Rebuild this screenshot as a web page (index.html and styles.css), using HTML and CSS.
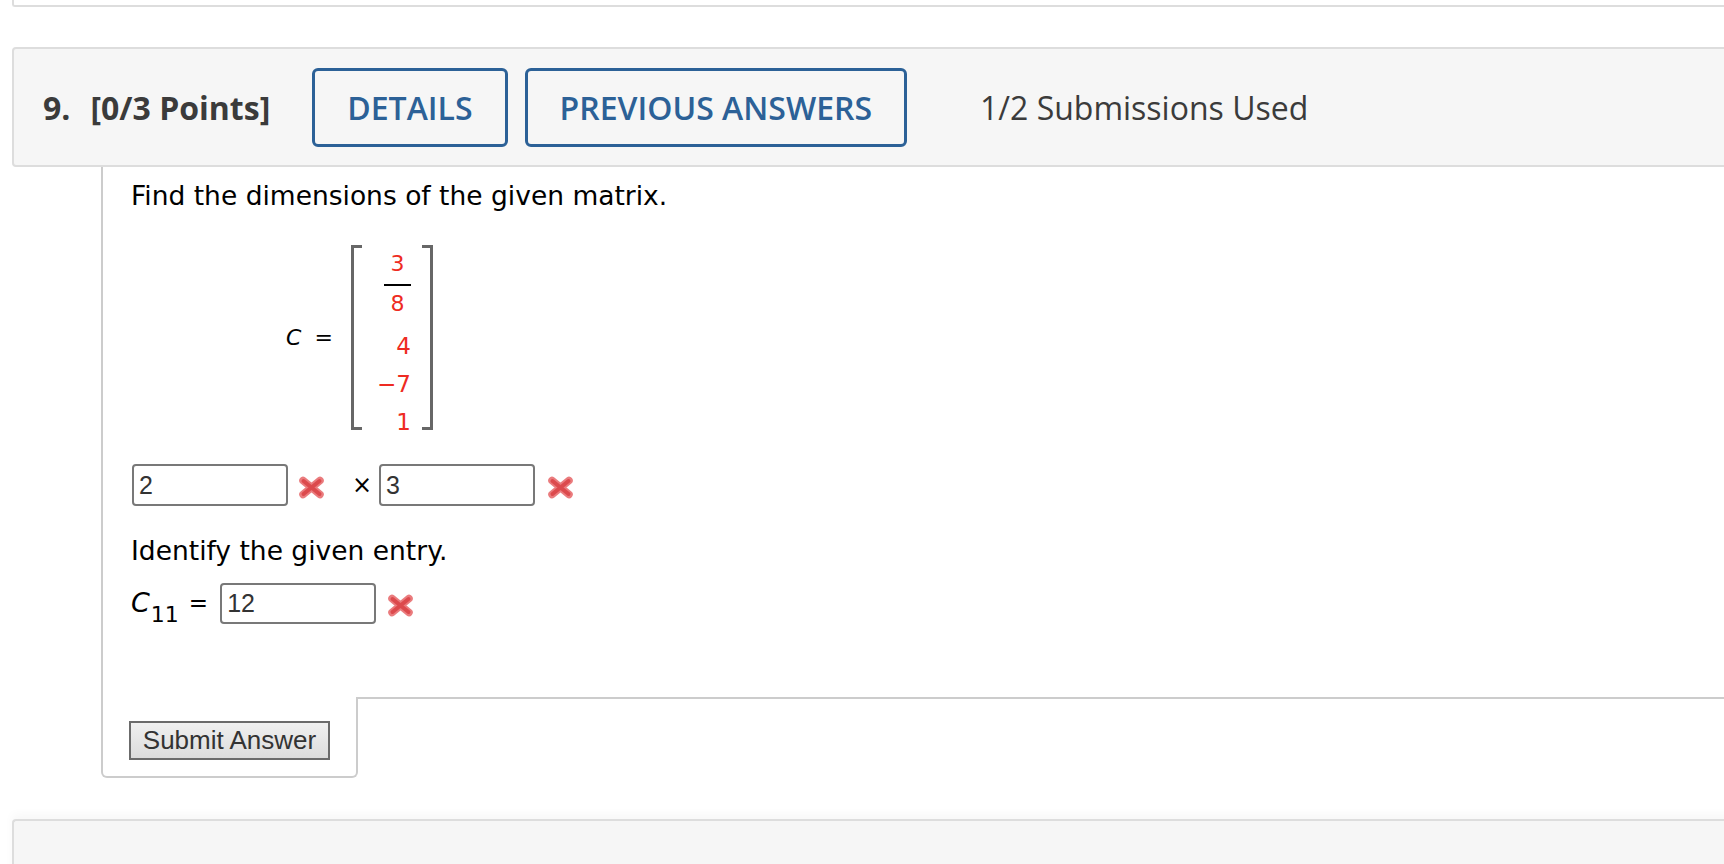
FILE: index.html
```html
<!DOCTYPE html>
<html lang="en">
<head>
<meta charset="utf-8">
<title>Question 9</title>
<link rel="stylesheet" href="styles.css">
</head>
<body>
<div class="page">
  <div class="prev-box"></div>
  <div class="question">
    <div class="q-header">
      <span class="q-num">9.</span>
      <span class="q-points">[0/3 Points]</span>
      <button class="hdr-btn btn-details">DETAILS</button>
      <button class="hdr-btn btn-prev">PREVIOUS ANSWERS</button>
      <span class="q-subs">1/2 Submissions Used</span>
    </div>
    <div class="q-body">
      <div class="q-content">
        <p class="prompt">Find the dimensions of the given matrix.</p>
        <div class="matrix">
          <div class="m-label"><span class="var">C</span><span class="m-eq">=</span></div>
          <div class="bracket bracket-l"></div>
          <div class="m-col">
            <div class="frac"><span class="num">3</span><span class="bar"></span><span class="den">8</span></div>
            <div class="entry">4</div>
            <div class="entry">&minus;7</div>
            <div class="entry">1</div>
          </div>
          <div class="bracket bracket-r"></div>
        </div>
        <div class="ans-row">
          <input class="ans ans-first" value="2" readonly>
          <svg class="xmark" viewBox="0 0 27 23" width="27" height="23"><path d="M5 4.5 L22 18.5 M22 4.5 L5 18.5" stroke="#ea7c7e" stroke-width="7.5" stroke-linecap="round" fill="none"/><path d="M5.5 5 L21.5 18 M21.5 5 L5.5 18" stroke="#dc4a4d" stroke-width="4" stroke-linecap="round" fill="none"/></svg>
          <span class="times">&times;</span>
          <input class="ans ans-second" value="3" readonly>
          <svg class="xmark xmark-2" viewBox="0 0 27 23" width="27" height="23"><path d="M5 4.5 L22 18.5 M22 4.5 L5 18.5" stroke="#ea7c7e" stroke-width="7.5" stroke-linecap="round" fill="none"/><path d="M5.5 5 L21.5 18 M21.5 5 L5.5 18" stroke="#dc4a4d" stroke-width="4" stroke-linecap="round" fill="none"/></svg>
        </div>
        <p class="prompt prompt-2">Identify the given entry.</p>
        <div class="entry-row">
          <span class="c-label"><span class="var">C</span><sub class="c-sub">11</sub></span>
          <span class="eq">=</span>
          <input class="ans ans-entry" value="12" readonly>
          <svg class="xmark xmark-3" viewBox="0 0 27 23" width="27" height="23"><path d="M5 4.5 L22 18.5 M22 4.5 L5 18.5" stroke="#ea7c7e" stroke-width="7.5" stroke-linecap="round" fill="none"/><path d="M5.5 5 L21.5 18 M21.5 5 L5.5 18" stroke="#dc4a4d" stroke-width="4" stroke-linecap="round" fill="none"/></svg>
        </div>
      </div>
      <div class="q-footer">
        <div class="submit-cell"><button class="submit">Submit Answer</button></div>
        <div class="footer-fill"></div>
      </div>
    </div>
  </div>
  <div class="next-box"></div>
</div>
</body>
</html>
```
FILE: styles.css
```css
html, body {
  margin: 0;
  padding: 0;
  background: #ffffff;
}

body {
  overflow: hidden;
}

.page {
  width: 1760px;
  padding-left: 12px;
  box-sizing: border-box;
}

.prev-box {
  height: 5px;
  border-left: 2px solid #dddddd;
  border-bottom: 2px solid #dddddd;
  border-bottom-left-radius: 3px;
}

.question {
  margin-top: 40px;
}

.q-header {
  display: flex;
  align-items: center;
  height: 120px;
  box-sizing: border-box;
  border: 2px solid #dddddd;
  border-radius: 4px;
  background: #f6f6f6;
  padding-left: 29px;
  font-family: "Open Sans", "Liberation Sans", sans-serif;
  font-size: 32px;
  color: #3b3b3b;
}

.q-num,
.q-points {
  font-weight: 700;
}

.q-points {
  margin-left: 20px;
}

.hdr-btn {
  height: 79px;
  box-sizing: border-box;
  border: 3px solid #2c6197;
  border-radius: 6px;
  background: transparent;
  color: #2c6197;
  font-family: "Open Sans", "Liberation Sans", sans-serif;
  font-weight: 600;
  font-size: 32px;
  padding: 0 32px;
  margin: 0;
}

.btn-details {
  margin-left: 42px;
}

.btn-prev {
  margin-left: 17px;
}

.q-subs {
  margin-left: 73px;
  font-weight: 400;
}

.q-body {
  margin-left: 89px;
}

.q-content {
  border-left: 2px solid #cccccc;
  padding: 13px 0 73px 28px;
}

.prompt {
  margin: 0;
  font-family: "DejaVu Sans", Verdana, sans-serif;
  font-size: 26.5px;
  line-height: 32px;
  color: #000000;
}

.matrix {
  display: flex;
  align-items: flex-start;
  margin-top: 33px;
  height: 185px;
  font-family: "DejaVu Sans", Verdana, sans-serif;
}

.m-label {
  width: 65px;
  margin-left: 155px;
  margin-top: 83px;
  font-size: 22px;
  line-height: 20px;
  color: #000000;
  white-space: nowrap;
}

.var {
  font-style: italic;
}

.m-eq {
  margin-left: 13px;
  font-size: 22px;
}

.bracket {
  width: 8px;
  height: 179px;
  border: 3px solid #676767;
}

.bracket-l {
  border-right: none;
}

.bracket-r {
  border-left: none;
}

.m-col {
  width: 49px;
  padding-right: 11px;
  height: 185px;
  display: flex;
  flex-direction: column;
  align-items: flex-end;
  color: #ee2b22;
}

.frac {
  width: 27px;
  display: flex;
  flex-direction: column;
  align-items: center;
  padding-top: 8px;
  margin-bottom: 12px;
  font-size: 22px;
  line-height: 22px;
}

.frac .bar {
  width: 27px;
  height: 2px;
  background: #000000;
  margin: 9px 0 7px;
}

.entry {
  font-size: 23px;
  line-height: 38px;
}

.ans-row {
  display: flex;
  align-items: center;
  margin-top: 34px;
  height: 42px;
}

.ans {
  width: 156px;
  height: 42px;
  box-sizing: border-box;
  border: 2px solid #787878;
  border-radius: 4px;
  padding: 0 5px;
  margin: 0;
  font-family: "Liberation Sans", Arial, sans-serif;
  font-size: 25px;
  color: #333333;
  background: #ffffff;
  outline: none;
  flex: none;
}

.ans-first {
  margin-left: 1px;
}

.xmark {
  flex: none;
  margin-left: 10px;
  margin-top: 5px;
}

.times {
  margin-left: 27px;
  width: 20px;
  font-family: "DejaVu Sans", Verdana, sans-serif;
  font-size: 24px;
  color: #000000;
}

.ans-second {
  margin-left: 7px;
}

.xmark-2 {
  margin-left: 12px;
}

.prompt-2 {
  margin-top: 29px;
}

.entry-row {
  display: flex;
  align-items: center;
  margin-top: 15.5px;
  height: 41px;
}

.c-label {
  align-self: flex-start;
  margin-top: 8px;
  font-family: "DejaVu Sans", Verdana, sans-serif;
  font-size: 27px;
  line-height: 23px;
  color: #000000;
  white-space: nowrap;
}

.c-sub {
  font-size: 22px;
  font-style: normal;
  vertical-align: -10px;
  line-height: 0;
  margin-left: 1px;
}

.eq {
  margin-left: 10px;
  font-family: "DejaVu Sans", Verdana, sans-serif;
  font-size: 23px;
  line-height: 22px;
  color: #000000;
}

.ans-entry {
  height: 41px;
  margin-left: 12px;
}

.xmark-3 {
  margin-left: 11px;
}

.q-footer {
  display: flex;
}

.submit-cell {
  flex: none;
  width: 257px;
  height: 81px;
  box-sizing: border-box;
  border: 2px solid #cccccc;
  border-top: none;
  border-radius: 0 0 6px 6px;
  padding: 24px 0 0 26px;
}

.submit {
  width: 201px;
  height: 39px;
  box-sizing: border-box;
  border: 2px solid #6b6b6b;
  border-radius: 0;
  background: linear-gradient(#f0f0f0, #dcdcdc);
  font-family: "Liberation Sans", Arial, sans-serif;
  font-size: 26px;
  color: #333333;
  padding: 0;
  margin: 0;
}

.footer-fill {
  flex: 1;
  border-top: 2px solid #cccccc;
}

.next-box {
  margin-top: 41px;
  height: 100px;
  border-top: 2px solid #dddddd;
  border-left: 2px solid #dddddd;
  border-top-left-radius: 4px;
  background: #f6f6f6;
  box-shadow: 0 -5px 10px rgba(0, 0, 0, 0.03);
}
```
